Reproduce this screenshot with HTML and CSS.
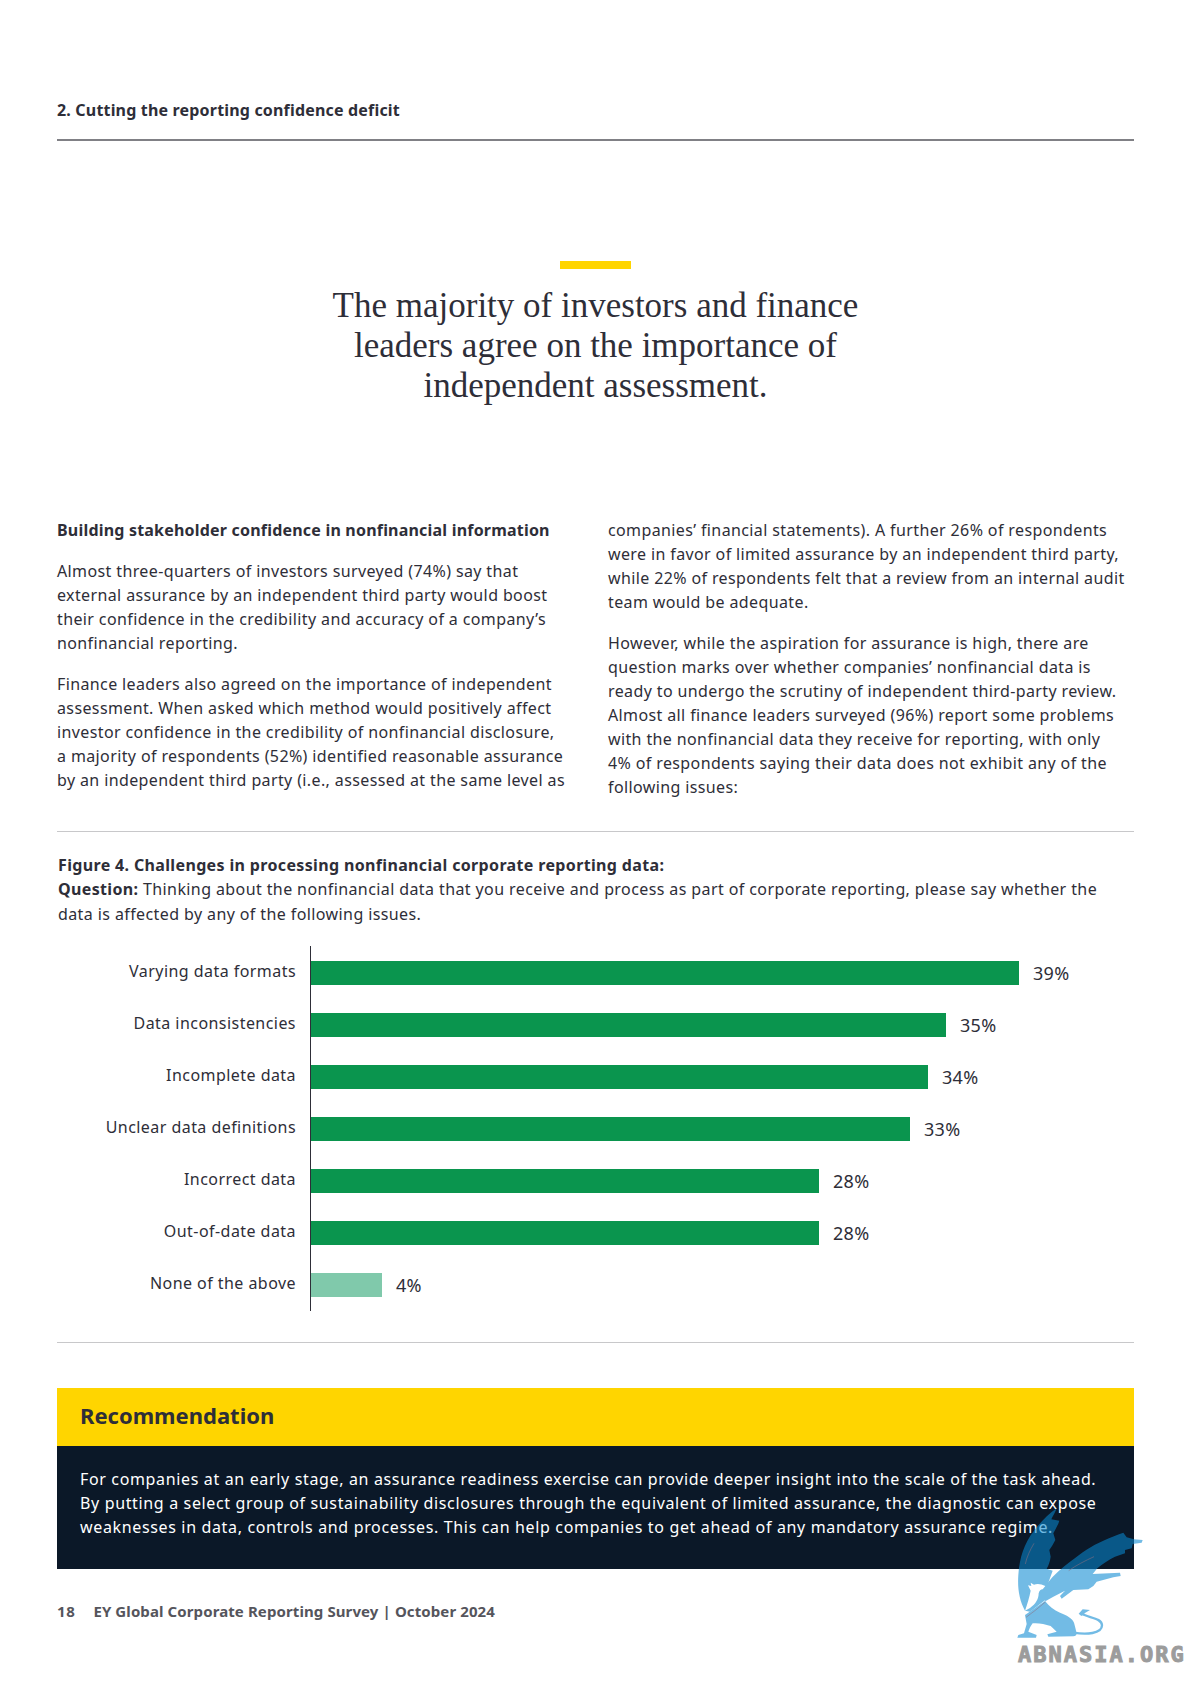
FILE: index.html
```html
<!DOCTYPE html>
<html lang="en">
<head><meta charset="utf-8"><title>EY Global Corporate Reporting Survey</title><link rel="stylesheet" href="styles.css"></head>
<body>
<main class="page">
  <header class="section-head">2. Cutting the reporting confidence deficit</header>
  <section class="pull">
    <div class="pull-bar"></div>
    <h1 class="pull-text">The majority of investors and finance<br>leaders agree on the importance of<br>independent assessment.</h1>
  </section>
  <section class="columns">
    <div class="col">
      <h2 class="col-title">Building stakeholder confidence in nonfinancial information</h2>
      <p class="para">Almost three-quarters of investors surveyed (74%) say that<br>external assurance by an independent third party would boost<br>their confidence in the credibility and accuracy of a company’s<br>nonfinancial reporting.</p>
      <p class="para">Finance leaders also agreed on the importance of independent<br>assessment. When asked which method would positively affect<br>investor confidence in the credibility of nonfinancial disclosure,<br>a majority of respondents (52%) identified reasonable assurance<br>by an independent third party (i.e., assessed at the same level as</p>
    </div>
    <div class="col">
      <p class="para">companies’ financial statements). A further 26% of respondents<br>were in favor of limited assurance by an independent third party,<br>while 22% of respondents felt that a review from an internal audit<br>team would be adequate.</p>
      <p class="para">However, while the aspiration for assurance is high, there are<br>question marks over whether companies’ nonfinancial data is<br>ready to undergo the scrutiny of independent third-party review.<br>Almost all finance leaders surveyed (96%) report some problems<br>with the nonfinancial data they receive for reporting, with only<br>4% of respondents saying their data does not exhibit any of the<br>following issues:</p>
    </div>
  </section>
  <section class="figure">
    <div class="fig-text">
      <strong>Figure 4. Challenges in processing nonfinancial corporate reporting data:</strong><br>
      <strong>Question:</strong> Thinking about the nonfinancial data that you receive and process as part of corporate reporting, please say whether the<br>data is affected by any of the following issues.
    </div>
    <div class="chart">
      <div class="row"><span class="label">Varying data formats</span><span class="bar" style="width:708px"></span><span class="val">39%</span></div>
      <div class="row"><span class="label">Data inconsistencies</span><span class="bar" style="width:635px"></span><span class="val">35%</span></div>
      <div class="row"><span class="label">Incomplete data</span><span class="bar" style="width:617px"></span><span class="val">34%</span></div>
      <div class="row"><span class="label">Unclear data definitions</span><span class="bar" style="width:599px"></span><span class="val">33%</span></div>
      <div class="row"><span class="label">Incorrect data</span><span class="bar" style="width:508px"></span><span class="val">28%</span></div>
      <div class="row"><span class="label">Out-of-date data</span><span class="bar" style="width:508px"></span><span class="val">28%</span></div>
      <div class="row"><span class="label">None of the above</span><span class="bar bar-light" style="width:71px"></span><span class="val">4%</span></div>
    </div>
  </section>
  <section class="rec">
    <h2 class="rec-head">Recommendation</h2>
    <p class="rec-body">For companies at an early stage, an assurance readiness exercise can provide deeper insight into the scale of the task ahead.<br>By putting a select group of sustainability disclosures through the equivalent of limited assurance, the diagnostic can expose<br>weaknesses in data, controls and processes. This can help companies to get ahead of any mandatory assurance regime.</p>
  </section>
  <footer class="foot"><span class="page-no">18</span><span>EY Global Corporate Reporting Survey | October 2024</span></footer>
</main>
<div class="mark">
  <svg class="griffin" viewBox="0 0 450 450" aria-hidden="true">
    <g class="griffin-body">
      <path d="M45 332C28 300 22 265 25 225C28 175 42 130 72 92C92 66 115 42 140 25C136 36 130 46 124 58L148 62C144 76 136 88 130 100L136 120C130 132 124 142 118 150L122 170C120 184 116 196 110 206L128 212L115 248L106 300L60 335Z"/>
      <path d="M112 250C132 224 156 204 182 184C212 160 246 136 280 122C300 113 320 104 340 98L350 112L372 118L398 120L395 128L368 132L365 145L345 150L345 160L315 170C296 180 276 192 262 205L248 222L330 218L332 228L310 232L260 245L250 258L235 268L190 270L155 296L150 288L165 272L130 290L106 304L96 270Z"/>
      <path d="M45 345L105 303C116 318 132 330 150 338C170 346 186 354 192 368C196 382 198 392 200 400C200 406 196 409 190 409L115 410L112 403L140 395L122 378C104 372 84 368 68 370C62 378 58 386 55 395L80 405L78 413L22 413L25 405L42 400L50 372Z"/>
      <path class="tail" d="M190 398C228 404 276 402 276 376C276 354 236 354 212 340"/>
      <path d="M206 341L218 328L240 330L226 338L214 348Z"/>
    </g>
    <path class="griffin-head" d="M45 332C52 312 58 292 62 272L54 256L64 258L62 248L72 254C82 250 94 252 106 258L98 268C92 268 88 272 86 280C86 296 78 312 60 324Z"/>
    <path class="griffin-streak" d="M72 130C60 150 50 172 46 192M252 170C226 182 198 196 176 212M106 306C88 322 68 338 48 352"/>
  </svg>
  <div class="mark-text">ABNASIA.ORG</div>
</div>
</body>
</html>
```
FILE: styles.css
```css
* { box-sizing: border-box; margin: 0; padding: 0; }
html, body { background: #fff; }
body { width: 1191px; height: 1684px; position: relative; overflow: hidden; font-family: "Noto Sans", sans-serif; color: #2e2e38; }
.page { padding: 99px 57px 0; }
.section-head { font-size: 16px; font-weight: 700; line-height: 22px; height: 42px; border-bottom: 2px solid #808085; letter-spacing: .18px; }
.pull { display: flex; flex-direction: column; align-items: center; padding-top: 120px; height: 377px; }
.pull-bar { width: 71px; height: 8px; background: #ffd500; }
.pull-text { font-family: "Liberation Serif", serif; font-weight: 400; font-size: 35px; line-height: 40px; text-align: center; margin-top: 17px; }
.columns { display: grid; grid-template-columns: 551px 526px; height: 313px; }
.col-title { font-size: 16px; font-weight: 700; line-height: 24px; margin-bottom: 17px; letter-spacing: .2px; white-space: nowrap; }
.para { font-size: 16px; line-height: 24px; margin-bottom: 17px; white-space: nowrap; letter-spacing: .38px; }
.figure { border-top: 1px solid #c8c8ca; border-bottom: 1px solid #c8c8ca; height: 512px; padding: 21px 0 0 1px; }
.fig-text { font-size: 16px; line-height: 24.4px; white-space: nowrap; letter-spacing: .4px; }
.fig-text strong { letter-spacing: .35px; }
.chart { margin-top: 20px; margin-left: -1px; padding: 15px 0 14px; position: relative; display: flex; flex-direction: column; gap: 28px; }
.chart::before { content: ""; position: absolute; left: 253px; top: 0; bottom: 0; width: 1px; background: #2e2e38; }
.row { display: flex; align-items: center; height: 24px; }
.label { width: 239px; text-align: right; font-size: 16px; margin-right: 15px; padding-bottom: 4px; flex: none; letter-spacing: .45px; }
.bar { height: 24px; background: #0a954e; flex: none; }
.bar-light { background: #80c9ab; }
.val { margin-left: 14px; font-size: 18px; letter-spacing: .3px; }
.rec { margin-top: 45px; }
.rec-head { background: #ffd500; height: 58px; padding-left: 23px; font-size: 22px; font-weight: 700; line-height: 55px; }
.rec-body { background: #0b1828; color: #fff; height: 123px; padding: 21px 23px 0; font-size: 16px; line-height: 24px; white-space: nowrap; letter-spacing: .65px; }
.foot { margin-top: 32px; display: flex; gap: 18px; font-size: 15px; font-weight: 700; color: #55555c; line-height: 20px; letter-spacing: .1px; }
.page-no { letter-spacing: .6px; }
.mark { position: absolute; left: 1010px; top: 1500px; width: 181px; height: 184px; }
.griffin { display: block; width: 150px; height: 150px; }
.griffin-body { fill: rgb(9,137,210); opacity: .57; }
.griffin-body .tail { fill: none; stroke: rgb(9,137,210); stroke-width: 7; }
.griffin-head { fill: #fff; }
.griffin-streak { fill: none; stroke: #8c6f80; stroke-width: 3; opacity: .55; }
.mark-text { position: absolute; left: 8px; top: 145px; font-family: "DejaVu Sans Mono", monospace; font-weight: 700; font-size: 22px; letter-spacing: 2px; color: #9c9c9c; line-height: 20px; white-space: nowrap; -webkit-text-stroke: 1px #9c9c9c; }
```
